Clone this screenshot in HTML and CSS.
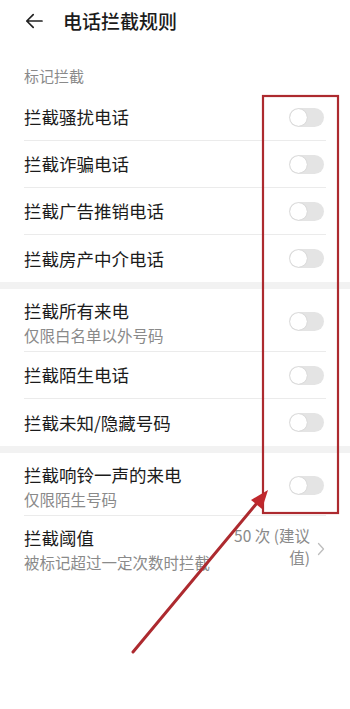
FILE: index.html
```html
<!DOCTYPE html>
<html lang="zh-CN">
<head>
<meta charset="utf-8">
<title>电话拦截规则</title>
<link rel="stylesheet" href="styles.css">
</head>
<body>
<div class="page">
  <header class="header">
    <svg class="back" width="18" height="16" viewBox="0 0 18 16" aria-hidden="true">
      <path d="M17 8 H1.8 M8.2 1.6 L1.8 8 L8.2 14.4" fill="none" stroke="#222" stroke-width="1.7" stroke-linecap="round" stroke-linejoin="round"/>
    </svg>
    <h1 class="title">电话拦截规则</h1>
  </header>

  <div class="label">标记拦截</div>
  <section class="group">
    <div class="row"><div class="text"><div class="name">拦截骚扰电话</div></div><span class="toggle"></span></div>
    <div class="row"><div class="text"><div class="name">拦截诈骗电话</div></div><span class="toggle"></span></div>
    <div class="row"><div class="text"><div class="name">拦截广告推销电话</div></div><span class="toggle"></span></div>
    <div class="row"><div class="text"><div class="name">拦截房产中介电话</div></div><span class="toggle"></span></div>
  </section>
  <div class="sep"></div>
  <section class="group">
    <div class="row tall"><div class="text"><div class="name">拦截所有来电</div><div class="sub">仅限白名单以外号码</div></div><span class="toggle"></span></div>
    <div class="row"><div class="text"><div class="name">拦截陌生电话</div></div><span class="toggle"></span></div>
    <div class="row"><div class="text"><div class="name">拦截未知/隐藏号码</div></div><span class="toggle"></span></div>
  </section>
  <div class="sep"></div>
  <section class="group">
    <div class="row tall"><div class="text"><div class="name">拦截响铃一声的来电</div><div class="sub">仅限陌生号码</div></div><span class="toggle"></span></div>
    <div class="row tall"><div class="text"><div class="name">拦截阈值</div><div class="sub">被标记超过一定次数时拦截</div></div>
      <div class="value">50 次 (建议<br>值)</div>
      <svg class="chev" width="8" height="14" viewBox="0 0 8 14" aria-hidden="true"><path d="M1.5 1.5 L6.5 7 L1.5 12.5" fill="none" stroke="#bdbdbd" stroke-width="1.3" stroke-linecap="round" stroke-linejoin="round"/></svg>
    </div>
  </section>

  <svg class="annot" width="350" height="709" viewBox="0 0 350 709" aria-hidden="true">
    <rect x="263" y="96" width="75" height="417" fill="none" stroke="#ad2a2f" stroke-width="2.2"/>
    <line x1="133" y1="652" x2="257" y2="503" stroke="#ad2a2f" stroke-width="3" stroke-linecap="round"/>
    <polygon points="268,490 262,509 251,500" fill="#c0282d"/>
  </svg>
</div>
</body>
</html>
```

FILE: styles.css
```css
* { box-sizing: border-box; }
html, body { margin: 0; padding: 0; background: #fff; }
body {
  font-family: "Noto Sans CJK SC", "Noto Sans", "Liberation Sans", sans-serif;
  color: #1b1b1b;
}
.page {
  position: relative;
  width: 350px;
  height: 709px;
  overflow: hidden;
}
.header {
  height: 42px;
  display: flex;
  align-items: center;
  padding-left: 25px;
  gap: 20px;
}
.back { flex: none; display: block; }
.title {
  margin: 0;
  font-size: 19px;
  font-weight: 500;
  line-height: 24px;
}
.label {
  padding: 24px 24px 8px;
  font-size: 15px;
  line-height: 20px;
  color: #8a8a8a;
}
.group { display: flex; flex-direction: column; }
.row {
  margin: 0 24px;
  height: 47px;
  display: flex;
  align-items: center;
  border-bottom: 1px solid #ebebeb;
}
.row:last-child { border-bottom: none; }
.row.tall { height: 63px; padding-top: 3px; }
.text { flex: 1; min-width: 0; }
.name {
  font-size: 17.5px;
  line-height: 24px;
}
.sub {
  margin-top: 2px;
  font-size: 15.5px;
  line-height: 20px;
  color: #8a8a8a;
  white-space: nowrap;
}
.toggle {
  flex: none;
  position: relative;
  width: 35px;
  height: 19px;
  margin-right: 2px;
  border-radius: 10px;
  background: #e4e4e4;
}
.toggle::before {
  content: "";
  position: absolute;
  left: 1px;
  top: 1px;
  width: 17px;
  height: 17px;
  border-radius: 50%;
  background: #fff;
  box-shadow: 0 0 1px rgba(0,0,0,0.25);
}
.value {
  flex: none;
  text-align: right;
  font-size: 15.5px;
  line-height: 22px;
  color: #8a8a8a;
  margin-right: 7px;
  margin-top: -6px;
}
.chev { flex: none; display: block; margin-right: 1px; }
.sep {
  height: 7px;
  background: #f2f2f2;
}
.annot {
  position: absolute;
  left: 0;
  top: 0;
  pointer-events: none;
}
```
